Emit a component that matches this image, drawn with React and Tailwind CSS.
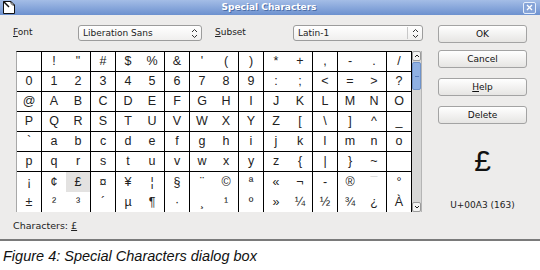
import React from "react";

const ui = "font-['DejaVu_Sans',sans-serif]";

const rows = [
  ["", "!", '"', "#", "$", "%", "&", "'", "(", ")", "*", "+", ",", "-", ".", "/"],
  ["0", "1", "2", "3", "4", "5", "6", "7", "8", "9", ":", ";", "<", "=", ">", "?"],
  ["@", "A", "B", "C", "D", "E", "F", "G", "H", "I", "J", "K", "L", "M", "N", "O"],
  ["P", "Q", "R", "S", "T", "U", "V", "W", "X", "Y", "Z", "[", "\\", "]", "^", "_"],
  ["`", "a", "b", "c", "d", "e", "f", "g", "h", "i", "j", "k", "l", "m", "n", "o"],
  ["p", "q", "r", "s", "t", "u", "v", "w", "x", "y", "z", "{", "|", "}", "~", ""],
  ["¡", "¢", "£", "¤", "¥", "¦", "§", "¨", "©", "ª", "«", "¬", "-", "®", "¯", "°"],
  ["±", "²", "³", "´", "µ", "¶", "·", "¸", "¹", "º", "»", "¼", "½", "¾", "¿", "À"],
];

const UpDown = () => (
  <svg width="7" height="11" viewBox="0 0 7 11" className="shrink-0">
    <path d="M1 4 L3.5 1.5 L6 4 M1 7 L3.5 9.5 L6 7" fill="none" stroke="#333" strokeWidth="1" />
  </svg>
);

const Select = ({ value, width, divider }) => (
  <div
    className={`${width} h-[16px] flex items-center rounded-[3px] border border-[#9c9c9c] bg-gradient-to-b from-white to-[#f0efee] pl-[4px] pr-[3px]`}
  >
    <span className="flex-1 text-[9px] text-[#222] leading-none">{value}</span>
    {divider && <span className="w-px h-[12px] bg-[#c8c8c8] mr-[4px]" />}
    <UpDown />
  </div>
);

const Button = ({ children, className = "" }) => (
  <button
    className={`block w-[89px] h-[18px] rounded-[3px] border border-[#a3a3a3] bg-gradient-to-b from-white to-[#e6e5e3] text-[9px] text-[#111] leading-none ${ui} ${className}`}
  >
    {children}
  </button>
);

const CharGrid = () => (
  <div className="flex">
    <div className="w-[396px] border-l border-[#a8a8a8] border-t border-t-black bg-white">
      {rows.map((row, r) => (
        <div key={r} className="flex h-[20px]">
          {row.map((ch, c) => {
            const right = c % 3 !== 1;
            const bottom = r < 6;
            const selected = r === 6 && c === 2;
            const faint = r === 6 && c === 14;
            return (
              <div
                key={c}
                className={`flex-1 flex items-center justify-center text-[12.5px] font-['Liberation_Sans',sans-serif] ${
                  faint ? "text-[#d0d0d0]" : "text-[#222]"
                } ${right ? "border-r border-black" : ""} ${bottom ? "border-b border-black" : ""} ${
                  selected ? "bg-[#e3e2e1]" : ""
                }`}
              >
                {ch}
              </div>
            );
          })}
        </div>
      ))}
    </div>
    {/* scrollbar */}
    <div className="w-[10px] flex flex-col bg-[#d7d7d6] border-r border-[#b5b5b5]">
      <div className="h-[10px] flex items-center justify-center bg-[#f4f4f3] border border-[#9a9a9a] rounded-[2px]">
        <svg width="6" height="4" viewBox="0 0 6 4">
          <path d="M1 3 L3 1 L5 3" fill="none" stroke="#222" strokeWidth="1" />
        </svg>
      </div>
      <div className="h-[28px] mt-px flex items-center justify-center rounded-[2px] bg-[#8fb0e2] border border-[#6f92c9]">
        <span className="w-[4px] h-px bg-[#5b7fbd]" />
      </div>
      <div className="flex-1" />
      <div className="h-[10px] flex items-center justify-center bg-[#f4f4f3] border border-[#9a9a9a] rounded-[2px]">
        <svg width="6" height="4" viewBox="0 0 6 4">
          <path d="M1 1 L3 3 L5 1" fill="none" stroke="#222" strokeWidth="1" />
        </svg>
      </div>
    </div>
  </div>
);

export default function App() {
  return (
    <div className="w-[540px] h-[270px] bg-white overflow-hidden">
      <div className="h-[241px] flex flex-col bg-[#edeceb] border-b-2 border-[#7a7a7a]">
        {/* title bar */}
        <div className="h-[15px] flex items-center bg-gradient-to-b from-[#a4bde6] to-[#6d91cf] px-[3px]">
          <svg width="12" height="13" viewBox="0 0 12 13" className="shrink-0">
            <path d="M0.5 0.5 H8 L11.5 4 V12.5 H0.5 Z" fill="#fff" stroke="#111" />
            <path d="M8 0.5 V4 H11.5" fill="none" stroke="#111" />
            <path d="M2 2 L7 2 L10 5 L10 11 L2 11 Z" fill="#fff" />
            <path d="M0.5 0.5 L6 6" stroke="#111" strokeWidth="1.5" />
          </svg>
          <div
            className={`flex-1 text-center text-[9px] font-bold text-white leading-none [text-shadow:1px_1px_0_#4d6ea8] ${ui}`}
          >
            Special Characters
          </div>
          <div className="w-[13px] h-[12px] mr-[1px] flex items-center justify-center border border-[#e6eefb] rounded-[2px] bg-[#86a4d8]">
            <svg width="7" height="7" viewBox="0 0 7 7">
              <path d="M1 1 L6 6 M6 1 L1 6" stroke="#fff" strokeWidth="1.3" />
            </svg>
          </div>
        </div>

        {/* body */}
        <div className={`flex-1 flex pl-[13px] pt-[10px] ${ui}`}>
          <div className="w-[410px] flex flex-col">
            <div className="h-[16px] flex items-center">
              <span className="w-[65px] text-[9px] text-[#222]">
                <span className="underline">F</span>ont
              </span>
              <Select value="Liberation Sans" width="w-[124px]" />
              <span className="w-[91px] pl-[13px] text-[9px] text-[#222]">
                <span className="underline">S</span>ubset
              </span>
              <Select value="Latin-1" width="w-[130px]" divider />
            </div>
            <div className="mt-[10px] ml-[3px]">
              <CharGrid />
            </div>
            <div className="mt-[9px] text-[9.5px] text-[#222] leading-none">
              Characters: <span className="underline">£</span>
            </div>
          </div>

          <div className="ml-[15px] w-[89px] flex flex-col items-center">
            <Button>OK</Button>
            <Button className="mt-[7px]">Cancel</Button>
            <Button className="mt-[10px]">
              <span className="underline">H</span>elp
            </Button>
            <Button className="mt-[10px]">Delete</Button>
            <div className="mt-[22px] h-[30px] text-[30px] leading-none text-[#111] font-['Liberation_Sans',sans-serif]">
              £
            </div>
            <div className="mt-[25px] text-[9px] leading-none text-[#222]">U+00A3 (163)</div>
          </div>
        </div>
      </div>

      <div className="pl-[3px] pt-[8px] text-[14.5px] italic text-[#111] leading-none font-['Liberation_Sans',sans-serif]">
        Figure 4: Special Characters dialog box
      </div>
    </div>
  );
}
